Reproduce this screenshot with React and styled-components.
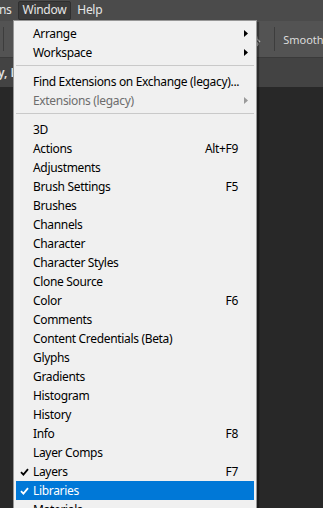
import React from 'react';
import styled, {createGlobalStyle} from "styled-components";

const GlobalStyle = createGlobalStyle`
  html, body {
    margin: 0;
    padding: 0;
    background: #282828;
    overflow: hidden;
  }
  body {
    font-family: "Segoe UI", "Noto Sans", "Open Sans", sans-serif;
  }
`;

const menuItems = [
    {label: 'Arrange', submenu: true},
    {label: 'Workspace', submenu: true},
    {separator: true},
    {label: 'Find Extensions on Exchange (legacy)...'},
    {label: 'Extensions (legacy)', submenu: true, disabled: true},
    {separator: true},
    {label: '3D'},
    {label: 'Actions', shortcut: 'Alt+F9'},
    {label: 'Adjustments'},
    {label: 'Brush Settings', shortcut: 'F5'},
    {label: 'Brushes'},
    {label: 'Channels'},
    {label: 'Character'},
    {label: 'Character Styles'},
    {label: 'Clone Source'},
    {label: 'Color', shortcut: 'F6'},
    {label: 'Comments'},
    {label: 'Content Credentials (Beta)'},
    {label: 'Glyphs'},
    {label: 'Gradients'},
    {label: 'Histogram'},
    {label: 'History'},
    {label: 'Info', shortcut: 'F8'},
    {label: 'Layer Comps'},
    {label: 'Layers', shortcut: 'F7', checked: true},
    {label: 'Libraries', checked: true, active: true},
    {label: 'Materials'},
];

const Check = ({color}) => (
    <svg width="9" height="8" viewBox="0 0 9 8">
        <path d="M1 4.2 L3.4 6.6 L8 1.2" fill="none" stroke={color} strokeWidth="1.8"/>
    </svg>
);

const Arrow = ({color}) => (
    <svg width="4" height="7" viewBox="0 0 4 7">
        <path d="M0 0 L4 3.5 L0 7 Z" fill={color}/>
    </svg>
);

const App = () => {
    return (
        <Screen>
            <GlobalStyle/>
            <MenuBar>
                <BarItem>ns</BarItem>
                <BarItem $open>Window</BarItem>
                <BarItem>Help</BarItem>
            </MenuBar>
            <ToolBar>
                <ToolDivider/>
                <ToolSpacer/>
                <BrushIcon width="14" height="16" viewBox="0 0 14 16">
                    <path d="M3 3 C6 3 8 5 8 8 L11 11 M6 9 L9 13 L8 15" fill="none" stroke="#bdbdbd" strokeWidth="1.4"/>
                </BrushIcon>
                <ToolDivider/>
                <ToolLabel>Smoothing</ToolLabel>
            </ToolBar>
            <TabBar>
                <TabText>y, L</TabText>
            </TabBar>
            <Canvas/>
            <Dropdown>
                {menuItems.map((item, i) => item.separator ? (
                    <Separator key={i}/>
                ) : (
                    <Item key={i} $active={item.active} $disabled={item.disabled}>
                        <CheckCell>
                            {item.checked && <Check color={item.active ? '#ffffff' : '#000000'}/>}
                        </CheckCell>
                        <Label>{item.label}</Label>
                        <Shortcut>{item.shortcut}</Shortcut>
                        <ArrowCell>
                            {item.submenu && <Arrow color={item.disabled ? '#9a9a9a' : '#000000'}/>}
                        </ArrowCell>
                    </Item>
                ))}
            </Dropdown>
        </Screen>
    )
}

const Screen = styled.div`
  position: relative;
  width: 323px;
  height: 508px;
  display: flex;
  flex-direction: column;
  background: #282828;
  overflow: hidden;
`;

const MenuBar = styled.div`
  height: 21px;
  display: flex;
  align-items: center;
  gap: 1px;
  margin-left: -6px;
  background: #4b4b4b;
  font-size: 12px;
  letter-spacing: -0.3px;
`;

const BarItem = styled.div`
  height: 17px;
  line-height: 16px;
  padding: 0 4px;
  color: #e6e6e6;
  border-radius: 2px;
  background: ${p => p.$open ? '#3a3a3a' : 'transparent'};
  border: 1px solid ${p => p.$open ? '#2f2f2f' : 'transparent'};
`;

const ToolBar = styled.div`
  height: 36px;
  display: flex;
  align-items: center;
  background: #535353;
  border-bottom: 1px solid #3a3a3a;
`;

const ToolDivider = styled.div`
  width: 1px;
  height: 24px;
  margin-left: 3px;
  background: #3d3d3d;
`;

const ToolSpacer = styled.div`
  flex: 1;
`;

const BrushIcon = styled.svg`
  margin-right: 8px;
`;

const ToolLabel = styled.div`
  margin-left: 8px;
  margin-right: -17px;
  font-size: 11px;
  color: #dcdcdc;
  white-space: nowrap;
`;

const TabBar = styled.div`
  height: 29px;
  display: flex;
  align-items: center;
  background: #434343;
`;

const TabText = styled.div`
  margin-left: -2px;
  font-size: 12px;
  font-weight: 600;
  color: #e0e0e0;
`;

const Canvas = styled.div`
  flex: 1;
  background: #282828;
`;

const Dropdown = styled.div`
  position: absolute;
  left: 13px;
  top: 20px;
  width: 238px;
  padding: 3px 2px 40px 2px;
  background: #f0f0f0;
  border: 1px solid #979797;
  box-shadow: 2px 2px 1px rgba(0, 0, 0, 0.35);
  font-size: 12px;
  letter-spacing: -0.33px;
`;

const Item = styled.div`
  height: 19px;
  display: flex;
  align-items: center;
  color: ${p => p.$active ? '#ffffff' : p.$disabled ? '#6d6d6d' : '#000000'};
  background: ${p => p.$active ? '#0078d7' : 'transparent'};
  white-space: nowrap;
`;

const CheckCell = styled.div`
  width: 17px;
  flex-shrink: 0;
  padding-left: 4px;
  box-sizing: border-box;
  display: flex;
  align-items: center;
`;

const Label = styled.div`
  flex: 1;
`;

const Shortcut = styled.div`
  text-align: right;
`;

const ArrowCell = styled.div`
  width: 16px;
  flex-shrink: 0;
  display: flex;
  justify-content: flex-end;
  padding-right: 6px;
  box-sizing: border-box;
`;

const Separator = styled.div`
  height: 1px;
  margin: 3px 0 6px;
  background: #c9c9c9;
`;

export default App;
